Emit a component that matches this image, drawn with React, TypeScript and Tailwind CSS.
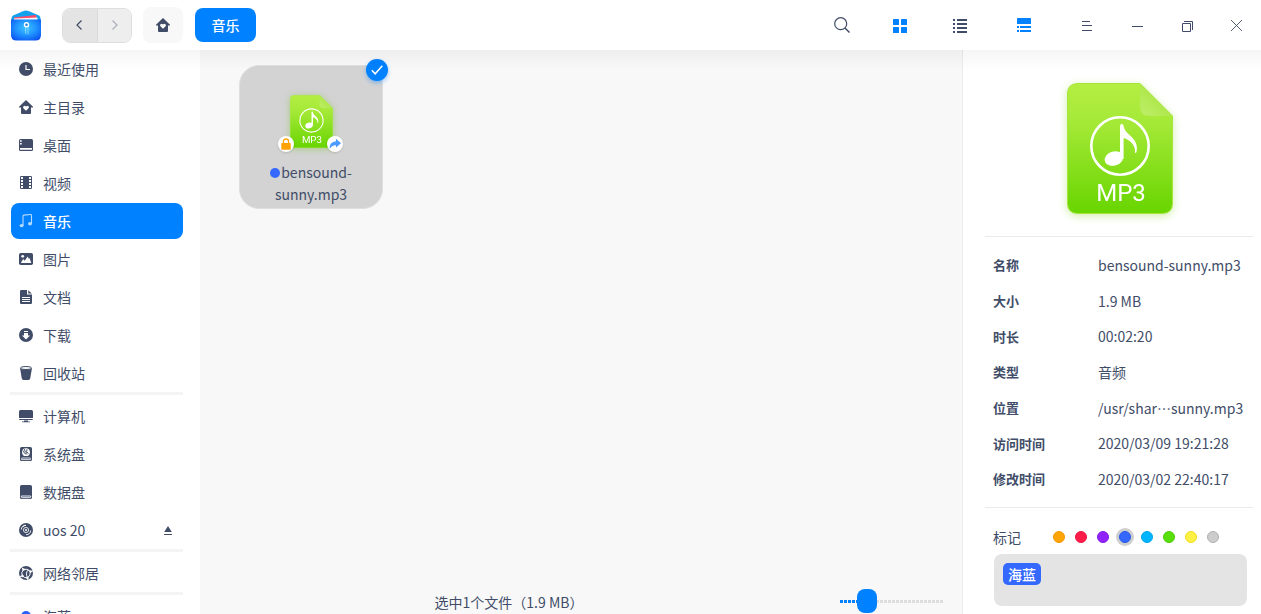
import { useState, type ReactNode } from 'react';

type IconName =
  | 'recent' | 'home' | 'desktop' | 'video' | 'music' | 'picture' | 'document'
  | 'download' | 'trash' | 'computer' | 'system' | 'data' | 'disc' | 'network' | 'tag';

const glyphs: Record<IconName, ReactNode> = {
  recent: (
    <>
      <circle cx="7" cy="7" r="7" fill="currentColor" />
      <path d="M7 3v4.500h4" fill="none" stroke="#fff" strokeWidth="1.200" />
    </>
  ),
  home: (
    <>
      <path d="M7 0 14 6.800v.7h-2V13a1 1 0 0 1-1 1H3a1 1 0 0 1-1-1V7.500H0v-.7Z" fill="currentColor" />
      <path d="M7 10.800 4.600 8.500a1.500 1.500 0 0 1 2.100-2.200l.3.300.3-.3a1.500 1.500 0 0 1 2.100 2.200Z" fill="#fff" />
    </>
  ),
  desktop: (
    <>
      <rect y="1" width="14" height="12" rx="1.500" fill="currentColor" />
      <path d="M1 10h12v1.800H1ZM1 2.200h1.700v1.600H1ZM1 5h1.700v1.600H1Z" fill="#fff" />
    </>
  ),
  video: (
    <>
      <rect x="1" y="0" width="12" height="13" rx="1.200" fill="currentColor" />
      <path
        d="M2 1h2v2H2ZM2 4h2v2H2ZM2 7h2v2H2ZM2 10h2v2H2ZM10 1h2v2h-2ZM10 4h2v2h-2ZM10 7h2v2h-2ZM10 10h2v2h-2Z"
        fill="#fff"
      />
    </>
  ),
  music: (
    <>
      <path d="M4 11.500V2.300Q4 1.200 5 1.100l6.500-.6q1-.1 1 .9V9.500" fill="none" stroke="currentColor" strokeWidth="1.100" />
      <ellipse cx="2.600" cy="11.600" rx="2" ry="1.700" fill="currentColor" />
      <ellipse cx="11" cy="9.800" rx="2" ry="1.700" fill="currentColor" />
    </>
  ),
  picture: (
    <>
      <rect y="1" width="14" height="12" rx="1.800" fill="currentColor" />
      <circle cx="3.700" cy="4.300" r="1.400" fill="#fff" />
      <path d="m1.800 11 2.400-4 1.500 1.700L8.600 4.500l1.300 2.200.6-.7L12.300 11Z" fill="#fff" />
    </>
  ),
  document: (
    <>
      <path d="M2.200 0H8v4.500h5v8.300q0 1.200-1.200 1.200H2.200Q1 14 1 12.800V1.200Q1 0 2.200 0ZM9.200.2 12.800 3.500H9.200Z" fill="currentColor" />
      <path d="M3 7.500h8M3 9.500h8M3 11.500h8" stroke="#fff" strokeWidth="1" />
    </>
  ),
  download: (
    <>
      <circle cx="7" cy="7" r="7" fill="currentColor" />
      <path d="M5 3h4v1H5ZM5 5h4v2.500h2L7 11.500 3 7.500h2Z" fill="#fff" />
    </>
  ),
  trash: (
    <>
      <path d="m1 2 1.800 10.600Q3 14 4.400 14h5.200q1.400 0 1.600-1.400L13 2Z" fill="currentColor" />
      <ellipse cx="7" cy="2" rx="5.500" ry="1.500" fill="#fff" stroke="currentColor" strokeWidth="1" />
    </>
  ),
  computer: (
    <>
      <path d="M1.500 1h11Q14 1 14 2.500V9H0V2.500Q0 1 1.500 1ZM0 10h14q0 1-1 1H1q-1 0-1-1Z" fill="currentColor" />
      <path d="M5 11.500h4v1h2v.8H3v-.8h2Z" fill="currentColor" />
    </>
  ),
  system: (
    <>
      <rect x="1" y="0" width="12" height="14" rx="1.600" fill="currentColor" />
      <circle cx="7" cy="5.200" r="3.900" fill="#fff" />
      <path d="M4 3.500q1.500 4.500 4.500 3.500M5.500 2q-.3 3.500 2.500 3.500M8 2.200Q6.500 5 9.500 6.500" fill="none" stroke="currentColor" strokeWidth=".9" />
      <rect x="2.300" y="11" width="9.400" height="1.600" rx=".8" fill="none" stroke="#fff" strokeWidth=".8" />
    </>
  ),
  data: (
    <>
      <rect x="1" y="0" width="12" height="14" rx="1.600" fill="currentColor" />
      <path d="M2.300 11v.7q0 1 1 1h7.400q1 0 1-1V11Z" fill="none" stroke="#fff" strokeWidth=".9" />
    </>
  ),
  disc: (
    <>
      <circle cx="7" cy="7" r="7" fill="currentColor" />
      <circle cx="7" cy="7" r="1" fill="#fff" />
      <circle cx="7" cy="7" r="2.600" fill="none" stroke="#fff" strokeWidth=".8" />
      <path d="M2.300 6.500A4.700 4.700 0 0 1 7 2.300M11.700 7.500A4.700 4.700 0 0 1 7 11.700M3.600 4Q5 2.400 7 2.300" fill="none" stroke="#fff" strokeWidth=".9" />
    </>
  ),
  network: (
    <>
      <circle cx="7" cy="7" r="7" fill="currentColor" />
      <path
        d="M4.500 3.500Q1.500 6.500 3.500 10M4.500 3.500Q8 2 11.500 5.500M11.500 5.500Q11.500 9.500 8.500 12M3.500 10Q5.500 12 8.500 12M4.500 3.500 2.500 1.500M11.500 5.500 14 5M8.500 12 9 14M3.500 10 .5 10.500M9.500 3.800Q6 6.500 8.500 12"
        fill="none"
        stroke="#fff"
        strokeWidth="1"
      />
      <circle cx="4.500" cy="3.500" r="1.200" fill="#fff" />
      <circle cx="11.500" cy="5.500" r="1.200" fill="#fff" />
      <circle cx="8.500" cy="12" r="1.200" fill="#fff" />
      <circle cx="3.500" cy="10" r="1.200" fill="#fff" />
    </>
  ),
  tag: <circle cx="7" cy="7" r="5" fill="#2b62f5" />,
};

function Glyph({ name }: { name: IconName }) {
  return (
    <svg viewBox="0 0 14 14" className="size-3.5 shrink-0" aria-hidden="true">
      {glyphs[name]}
    </svg>
  );
}

const places: { label: string; icon: IconName }[][] = [
  [
    { label: '最近使用', icon: 'recent' },
    { label: '主目录', icon: 'home' },
    { label: '桌面', icon: 'desktop' },
    { label: '视频', icon: 'video' },
    { label: '音乐', icon: 'music' },
    { label: '图片', icon: 'picture' },
    { label: '文档', icon: 'document' },
    { label: '下载', icon: 'download' },
    { label: '回收站', icon: 'trash' },
  ],
  [
    { label: '计算机', icon: 'computer' },
    { label: '系统盘', icon: 'system' },
    { label: '数据盘', icon: 'data' },
    { label: 'uos 20', icon: 'disc' },
  ],
  [{ label: '网络邻居', icon: 'network' }],
  [{ label: '海蓝', icon: 'tag' }],
];

const details = [
  ['名称', 'bensound-sunny.mp3'],
  ['大小', '1.9 MB'],
  ['时长', '00:02:20'],
  ['类型', '音频'],
  ['位置', '/usr/shar…sunny.mp3'],
  ['访问时间', '2020/03/09 19:21:28'],
  ['修改时间', '2020/03/02 22:40:17'],
];

const tagColors = [
  { name: '橙色', fill: 'bg-[#ffa503] border-[#f09a00]' },
  { name: '红色', fill: 'bg-[#ff1c49] border-[#ee1540]' },
  { name: '紫色', fill: 'bg-[#9023fc] border-[#8219ea]' },
  { name: '海蓝', fill: 'bg-[#3468ff] border-[#2459ea]' },
  { name: '天蓝', fill: 'bg-[#00b5ff] border-[#00a6ec]' },
  { name: '绿色', fill: 'bg-[#58df0a] border-[#4dcb05]' },
  { name: '黄色', fill: 'bg-[#fef144] border-[#f0dc20]' },
  { name: '灰色', fill: 'bg-[#cccccc] border-[#b0b0b0]' },
];

function Mp3Icon({ id, className }: { id: string; className: string }) {
  return (
    <svg viewBox="0 0 106 131" className={className} role="img" aria-label="MP3">
      <defs>
        <linearGradient id={`${id}-body`} x1="0" y1="0" x2="0" y2="1">
          <stop offset="0" stopColor="#b4ee42" />
          <stop offset=".3" stopColor="#a5e937" />
          <stop offset="1" stopColor="#68d500" />
        </linearGradient>
        <linearGradient id={`${id}-fold`} x1="0" y1="1" x2="1" y2="0">
          <stop offset="0" stopColor="#bfee6c" />
          <stop offset="1" stopColor="#a0e22c" />
        </linearGradient>
      </defs>
      <path
        d="M11 .5h62L105.500 33v87q0 10.500-10.500 10.500H11Q.5 130.500.5 120V11Q.5.5 11 .5Z"
        fill={`url(#${id}-body)`}
        stroke="#a6e63c"
        strokeWidth="1"
      />
      <path d="M73 .5 105.500 33H83q-10 0-10-10Z" fill={`url(#${id}-fold)`} />
      <circle cx="53" cy="63" r="28.700" fill="none" stroke="#fff" strokeWidth="2.600" />
      <ellipse cx="47" cy="75.500" rx="9.500" ry="7" fill="#fff" transform="rotate(-18 47 75.500)" />
      <path
        d="M53 75V43q0-2 1.800-2t1.800 2q.5 4.500 5.400 8.500c6 5 9.500 11 7.300 18q-.8 1-1.300 0c.8-6-3.500-12-11.400-14.500V76Z"
        fill="#fff"
      />
      <text x="54" y="118" textAnchor="middle" fill="#fff" fontFamily="Roboto, sans-serif" fontSize="24" fontWeight="400">
        MP3
      </text>
    </svg>
  );
}

function Logo() {
  return (
    <svg viewBox="0 0 30 31" className="h-[31px] w-[30px] shrink-0" role="img" aria-label="文件管理器">
      <defs>
        <radialGradient id="logo-face" cx=".5" cy=".4" r=".7">
          <stop offset="0" stopColor="#3cc4ff" />
          <stop offset=".5" stopColor="#1f93ff" />
          <stop offset="1" stopColor="#0a4ff0" />
        </radialGradient>
      </defs>
      <path d="M2 5.500 12 1.200q3-1.200 6 0L28 5.500q1.500.8 1.500 3V14H.5V8.500Q.5 6.300 2 5.500Z" fill="#13a0ee" />
      <path d="M3 7.500 25 5l1 6H3Z" fill="#ff4a6b" />
      <path d="M3 8.500 26.500 7.500V12H3Z" fill="#f3f6fb" />
      <path d="M0 9.500h30V25q0 5.500-5.500 5.500h-19Q0 30.500 0 25Z" fill="url(#logo-face)" />
      <path d="M14 16h1.200v8.500L14 23Zm2.500 0h1v9l-1-1Z" fill="#7fd3ff" />
      <circle cx="15.500" cy="14.800" r="2" fill="#1d7de0" stroke="#fff" strokeWidth="1.400" />
    </svg>
  );
}

function ToolButton({ label, className, children }: { label: string; className: string; children: ReactNode }) {
  return (
    <button type="button" aria-label={label} className={`flex h-10 items-center justify-center ${className}`}>
      {children}
    </button>
  );
}

function TitleBar() {
  return (
    <header className="flex h-[50px] shrink-0 items-center bg-white pl-[11px]">
      <Logo />
      <div className="ml-[21px] flex h-[35px] w-[70px] overflow-hidden rounded-lg border border-[#dedede]">
        <button type="button" aria-label="后退" className="flex flex-1 items-center justify-center border-r border-[#d9d9d9] bg-[#e4e4e4] pr-0.5">
          <svg viewBox="0 0 6 10" className="h-2.5 w-1.5" fill="none" stroke="currentColor" strokeWidth="1.200">
            <path d="M5.500.5 1 5l4.500 4.500" />
          </svg>
        </button>
        <button type="button" aria-label="前进" disabled className="flex flex-1 items-center justify-center bg-[#eeeeee] pl-0.5 text-[#a9aeb8]">
          <svg viewBox="0 0 6 10" className="h-2.5 w-1.5" fill="none" stroke="currentColor" strokeWidth="1.200">
            <path d="M.5.5 5 5 .5 9.500" />
          </svg>
        </button>
      </div>
      <button type="button" aria-label="主目录" className="ml-[11px] flex h-9 w-10 items-center justify-center rounded-lg bg-[#f8f8f8]">
        <Glyph name="home" />
      </button>
      <button type="button" className="ml-3 h-[34px] w-[61px] rounded-lg bg-[#0081ff] text-sm font-medium text-white">
        音乐
      </button>

      <div className="ml-auto flex items-center">
        <ToolButton label="搜索" className="w-10">
          <svg viewBox="0 0 16 16" className="size-4" fill="none" stroke="currentColor" strokeWidth="1.200">
            <circle cx="6.700" cy="6.700" r="6" />
            <path d="m11 11 4.500 4.500" strokeWidth="1.500" />
          </svg>
        </ToolButton>
        <ToolButton label="图标视图" className="ml-[18px] w-10 text-[#0081ff]">
          <svg viewBox="0 0 14 14" className="mt-0.5 size-3.5" fill="currentColor">
            <rect width="6" height="6" rx=".6" />
            <rect x="8" width="6" height="6" rx=".6" />
            <rect y="8" width="6" height="6" rx=".6" />
            <rect x="8" y="8" width="6" height="6" rx=".6" />
          </svg>
        </ToolButton>
        <ToolButton label="列表视图" className="ml-5 w-10">
          <svg viewBox="0 0 14 14" className="mt-0.5 size-3.5" fill="currentColor">
            <path d="M0 0h2v2H0ZM4 0h10v2H4ZM0 4h2v2H0ZM4 4h10v2H4ZM0 8h2v2H0ZM4 8h10v2H4ZM0 12h2v2H0ZM4 12h10v2H4Z" />
          </svg>
        </ToolButton>
        <ToolButton label="详细信息" className="ml-6 w-10 text-[#0081ff]">
          <svg viewBox="0 0 14 14" className="size-3.5" fill="currentColor">
            <rect width="14" height="6" rx=".6" />
            <path d="M0 8h2v2H0ZM3 8h11v2H3ZM0 12h2v2H0ZM3 12h11v2H3Z" />
          </svg>
        </ToolButton>
        <ToolButton label="菜单" className="ml-[18px] w-[50px]">
          <svg viewBox="0 0 10 10" className="mt-0.5 size-2.5" fill="currentColor">
            <path d="M0 0h8v1H0ZM0 4h10v1H0ZM0 9h10v1H0Z" />
          </svg>
        </ToolButton>
        <ToolButton label="最小化" className="w-[50px]">
          <svg viewBox="0 0 11 1" className="mt-0.5 h-px w-[11px]" fill="currentColor">
            <path d="M0 0h11v1H0Z" />
          </svg>
        </ToolButton>
        <ToolButton label="还原" className="w-[50px]">
          <svg viewBox="0 0 11 11" className="mt-0.5 size-[11px]" fill="none" stroke="currentColor" strokeWidth="1">
            <path d="M.5 2.500h8v8h-8ZM2 .5h8.500V9" />
          </svg>
        </ToolButton>
        <ToolButton label="关闭" className="w-[49px]">
          <svg viewBox="0 0 11 11" className="mt-px size-[11px]" fill="none" stroke="currentColor" strokeWidth=".9">
            <path d="m0 0 11 11M11 0 0 11" />
          </svg>
        </ToolButton>
      </div>
    </header>
  );
}

function Sidebar() {
  return (
    <nav className="w-[200px] shrink-0 overflow-hidden bg-white pt-px">
      {places.map((group) => (
        <ul
          key={group[0].label}
          className="mr-[17px] mb-[3px] ml-2.5 flex flex-col gap-0.5 border-b-[3px] border-[#f4f4f4] pb-px pl-px last:border-0"
        >
          {group.map(({ label, icon }) => (
            <li key={label} className="flex">
              <a
                href={`#${icon}`}
                className={
                  label === '音乐'
                    ? 'flex h-9 flex-1 items-center gap-2.5 rounded-lg bg-[#0081ff] px-2 text-sm font-medium text-white'
                    : 'flex h-9 flex-1 items-center gap-2.5 rounded-lg px-2 text-sm'
                }
              >
                <span className={label === '音乐' ? 'text-[#b5daff]' : ''}>
                  <Glyph name={icon} />
                </span>
                {label}
                {icon === 'disc' && (
                  <svg viewBox="0 0 8 9" className="mr-[3px] ml-auto h-[9px] w-2" fill="currentColor" aria-label="弹出">
                    <path d="M4 0 7.800 6H.2ZM0 8h8v1H0Z" />
                  </svg>
                )}
              </a>
            </li>
          ))}
        </ul>
      ))}
    </nav>
  );
}

function FileCard() {
  return (
    <button
      type="button"
      className="relative flex h-36 w-36 flex-col items-center rounded-[20px] border border-[#dfdfdf] bg-[#d3d3d3] px-5 pt-[29px] text-sm/[22px]"
    >
      <span className="relative">
        <Mp3Icon id="card" className="h-[53px] w-[43px] drop-shadow-[0_1px_3px_rgba(120,200,30,0.5)]" />
        <span className="absolute top-[41px] -left-3 flex size-4 items-center justify-center rounded-full bg-white shadow-sm">
          <svg viewBox="0 0 10 12" className="h-3 w-2.5" aria-hidden="true">
            <path d="M2.500 5.500V3a2.500 2 0 0 1 5 0v2.500" fill="none" stroke="#ffa200" strokeWidth="1.300" />
            <rect x=".3" y="5" width="9.400" height="6.700" rx=".8" fill="#ffa200" />
          </svg>
        </span>
        <span className="absolute top-[41px] -right-2.5 flex size-4 items-center justify-center rounded-full bg-white shadow-sm">
          <svg viewBox="0 0 12 12" className="size-3" aria-hidden="true">
            <path d="M7 .8 12 5.200 7 9.500V7.200Q2.800 7 .6 11 .2 4 7 3.200Z" fill="#4a9bff" />
          </svg>
        </span>
      </span>
      <span className="mt-[13px] text-center">
        <span className="mr-px inline-block size-2.5 rounded-full bg-[#3468ff]" />
        bensound-
        <br />
        sunny.mp3
      </span>
      <span className="absolute -top-[7px] -right-1.5 flex size-[22px] items-center justify-center rounded-full bg-[#0081ff] shadow-[0_2px_4px_rgba(0,129,255,0.4)]">
        <svg viewBox="0 0 12 10" className="h-2.5 w-3" fill="none" stroke="#fff" strokeWidth="1.500" aria-hidden="true">
          <path d="m.8 5.200 3.400 3.600L11.300.8" />
        </svg>
      </span>
    </button>
  );
}

function Details() {
  const [tag, setTag] = useState('海蓝');
  return (
    <aside className="w-[299px] shrink-0 overflow-hidden border-l border-[#ebebeb] bg-white pt-[33px] pr-2 pl-[22px]">
      <div className="flex justify-center border-b border-[#ebebeb] pb-[22px] pl-0.5">
        <Mp3Icon id="preview" className="h-[131px] w-[106px] drop-shadow-[0_2px_4px_rgba(140,210,40,0.4)]" />
      </div>
      <dl className="mt-2.5 grid h-[250px] auto-rows-fr">
        {details.map(([name, value]) => (
          <div key={name} className="flex items-center pl-2">
            <dt className="w-[105px] shrink-0 text-[13px] font-bold">{name}</dt>
            <dd className="text-sm whitespace-nowrap">{value}</dd>
          </div>
        ))}
      </dl>
      <section className="mt-2.5 border-t border-[#ebebeb] pt-[19px] pl-2">
        <div className="flex h-5 items-center text-sm">
          <h2 className="w-[55px]">标记</h2>
          <div className="flex">
            {tagColors.map(({ name, fill }) => (
              <button
                key={name}
                type="button"
                aria-label={name}
                aria-pressed={name === tag}
                onClick={() => setTag(name)}
                className="flex w-[22px] items-center justify-center"
              >
                <span className={name === tag ? 'rounded-full bg-[#cfcfcf] p-[3px]' : 'p-[3px]'}>
                  <span className={`block size-3 rounded-full border ${fill}`} />
                </span>
              </button>
            ))}
          </div>
        </div>
        <div className="mt-[7px] mr-1.5 ml-px h-[52px] rounded-lg bg-[#e4e4e4] p-[9px]">
          <span className="block h-[22px] w-fit rounded-[5px] bg-[#3468ff] px-[5px] text-sm/[22px] font-medium text-white">{tag}</span>
        </div>
      </section>
    </aside>
  );
}

export default function App() {
  const [zoom, setZoom] = useState(1);
  return (
    <div
      lang="zh-CN"
      className="flex h-screen flex-col overflow-hidden bg-white font-['Noto_Sans_CJK_SC',sans-serif] text-[#414d68]"
    >
      <TitleBar />
      <div className="relative flex min-h-0 flex-1">
        <Sidebar />
        <main className="flex min-w-0 flex-1 flex-col bg-[#f8f8f8]">
          <div className="min-h-0 flex-1 px-[39px] pt-[15px]">
            <FileCard />
          </div>
          <footer className="flex h-[26px] shrink-0 items-center pr-[18px]">
            <p className="flex-1 pt-0.5 text-center text-sm">选中1个文件（1.9 MB）</p>
            <input
              type="range"
              aria-label="图标大小"
              min={0}
              max={5}
              value={zoom}
              onChange={(event) => setZoom(Number(event.target.value))}
              className="ml-[22px] h-6 w-[104px] appearance-none bg-transparent [&::-webkit-slider-runnable-track]:h-[3px] [&::-webkit-slider-runnable-track]:bg-[repeating-linear-gradient(to_right,transparent_0_3px,#f8f8f8_3px_4px),linear-gradient(to_right,#0081ff_25%,#dddddd_25%)] [&::-webkit-slider-thumb]:-mt-[11px] [&::-webkit-slider-thumb]:h-6 [&::-webkit-slider-thumb]:w-5 [&::-webkit-slider-thumb]:appearance-none [&::-webkit-slider-thumb]:rounded-lg [&::-webkit-slider-thumb]:bg-[#0081ff]"
            />
          </footer>
        </main>
        <Details />
        <div className="pointer-events-none absolute inset-x-0 top-0 h-5 bg-linear-to-b from-black/4 to-transparent" />
      </div>
    </div>
  );
}
